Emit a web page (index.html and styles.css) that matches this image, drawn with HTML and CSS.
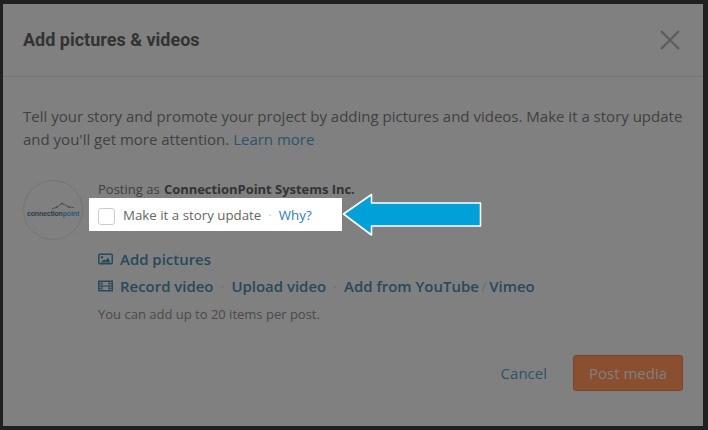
FILE: index.html
```html
<!DOCTYPE html>
<html lang="en">
<head>
<meta charset="utf-8">
<title>Add pictures &amp; videos</title>
<link rel="stylesheet" href="styles.css">
</head>
<body>
<div class="modal">
  <header class="modal-head">
    <h1 class="modal-title">Add pictures &amp; videos</h1>
    <svg class="close" width="20" height="20" viewBox="0 0 20 20" aria-label="Close"><path d="M1 1 L19 19 M19 1 L1 19" fill="none" stroke="#5e5e5e" stroke-width="2.4"/></svg>
  </header>
  <div class="modal-body">
    <p class="intro">Tell your story and promote your project by adding pictures and videos. Make it a story update and you'll get more attention. <a class="learn">Learn more</a></p>
    <div class="poster">
      <div class="avatar">
        <svg class="logo-roof" width="24" height="8" viewBox="0 0 24 8"><path d="M1 7 L6 5 L11 1.5 L18 5 L23 5.5" fill="none" stroke="#3f5560" stroke-width="1"/><circle cx="6" cy="5" r="1" fill="#3f5560"/><circle cx="11" cy="1.5" r="1" fill="#3f5560"/><circle cx="18" cy="5" r="1" fill="#3f5560"/></svg>
        <div class="logo-text"><span class="logo-a">connection</span><span class="logo-b">point</span></div>
      </div>
      <div class="poster-main">
        <div class="posting">Posting as <b>ConnectionPoint Systems Inc.</b></div>
        <div class="story-row">
          <span class="check"></span>
          <span class="story-label">Make it a story update</span>
          <span class="story-dot">·</span>
          <a class="why">Why?</a>
        </div>
        <div class="links links-first">
          <svg class="ico" width="15" height="12" viewBox="0 0 15 12"><rect x="0.75" y="1.25" width="13.5" height="9.5" rx="1" fill="none" stroke="#28495b" stroke-width="1.5"/><circle cx="4" cy="4.2" r="1.2" fill="#28495b"/><path d="M2.5 9.5 L6 6.5 L7.5 7.5 L10 4.5 L12.5 9.5 Z" fill="#28495b"/></svg>
          <a class="link">Add pictures</a>
        </div>
        <div class="links">
          <svg class="ico" width="15" height="12" viewBox="0 0 15 12"><rect x="0.75" y="1.25" width="13.5" height="9.5" fill="none" stroke="#28495b" stroke-width="1.5"/><path d="M4 1 V11 M11 1 V11 M4 6 H11 M1 3.7 H4 M1 6 H4 M1 8.3 H4 M11 3.7 H14 M11 6 H14 M11 8.3 H14" fill="none" stroke="#28495b" stroke-width="1"/></svg>
          <a class="link">Record video</a>
          <span class="sep">·</span>
          <a class="link">Upload video</a>
          <span class="sep">·</span>
          <a class="link">Add from YouTube</a><span class="slash">/</span><a class="link">Vimeo</a>
        </div>
        <p class="limit">You can add up to 20 items per post.</p>
      </div>
    </div>
    <footer class="actions">
      <a class="cancel">Cancel</a>
      <button class="post" type="button">Post media</button>
    </footer>
  </div>
  <svg class="arrow" width="141" height="44" viewBox="0 0 141 44"><path d="M1.5 21 L29.5 1.5 V10 H138.5 V33 H29.5 V42 Z" fill="#00a0d8" stroke="#fff" stroke-width="1.6" stroke-linejoin="round"/></svg>
</div>
</body>
</html>
```

FILE: styles.css
```css
* { box-sizing: border-box; }
html, body { margin: 0; height: 100%; }
body {
  background: #202020;
  padding: 4px 5px 4px 3px;
  font-family: "Open Sans", sans-serif;
  overflow: hidden;
}
.modal {
  position: relative;
  height: 422px;
  background: #808080;
  color: #3d3d3d;
}
.modal-head {
  height: 73px;
  border-bottom: 1px solid #757575;
  display: flex;
  align-items: center;
  justify-content: space-between;
  padding: 0 23px 0 20px;
}
.modal-title {
  margin: 0;
  font: 700 18px/22px Roboto, sans-serif;
  color: #333;
}
.modal-body { padding: 28px 20px 0; }
.intro {
  margin: 0;
  font-size: 15px;
  line-height: 23px;
  color: #414141;
}
.learn { color: #2b5468; }
.poster { display: flex; margin-top: 29px; }
.avatar {
  width: 60px;
  height: 60px;
  border: 1px solid #747474;
  border-radius: 50%;
  flex: none;
  display: flex;
  flex-direction: column;
  align-items: center;
  margin-right: 15px;
  padding-top: 21px;
}
.logo-roof { display: block; margin-left: 20px; }
.logo-text {
  font: 700 7px/8px "Liberation Sans", sans-serif;
  white-space: nowrap;
  letter-spacing: -0.15px;
}
.logo-a { color: #2b3d47; }
.logo-b { color: #2d5b75; }
.poster-main { flex: 1; position: relative; }
.posting { font-size: 13px; line-height: 18px; color: #3f3f3f; }
.posting b { font-weight: 700; color: #333; letter-spacing: -0.04px; margin-left: 1px; }
.story-row {
  position: relative;
  z-index: 1;
  background: #fff;
  width: 253px;
  height: 33px;
  margin: 0 0 0 -9px;
  padding: 0 0 0 9px;
  display: flex;
  align-items: center;
  font-size: 13.3px;
  color: #666;
}
.check {
  width: 17px;
  height: 17px;
  border: 1px solid #ccc;
  border-radius: 3px;
  margin-right: 8px;
  margin-top: 4px;
}
.story-dot { color: #ccc; margin: 0 7px; }
.why { color: #2b7fb0; }
.links {
  display: flex;
  align-items: center;
  height: 27px;
  font-size: 14.95px;
  font-weight: 600;
  color: #28495b;
}
.links-first { margin-top: 14px; }
.ico { margin-right: 7px; flex: none; }
.sep { color: #6e6e6e; margin: 0 7px; font-weight: 400; }
.slash { color: #6f6f6f; margin: 0 2.5px; font-weight: 400; }
.limit { margin: 6px 0 0; font-size: 13px; line-height: 18px; color: #4a4a4a; }
.actions {
  display: flex;
  justify-content: flex-end;
  align-items: center;
  margin-top: 32px;
}
.cancel { color: #2b5468; font-size: 15px; margin-right: 26px; }
.post {
  width: 110px;
  height: 36px;
  background: #8a4f30;
  border: 1px solid #7a4629;
  border-radius: 3px;
  color: #808080;
  font: 15px "Open Sans", sans-serif;
  padding: 0;
}
.arrow { position: absolute; left: 339px; top: 189px; z-index: 2; }
```
